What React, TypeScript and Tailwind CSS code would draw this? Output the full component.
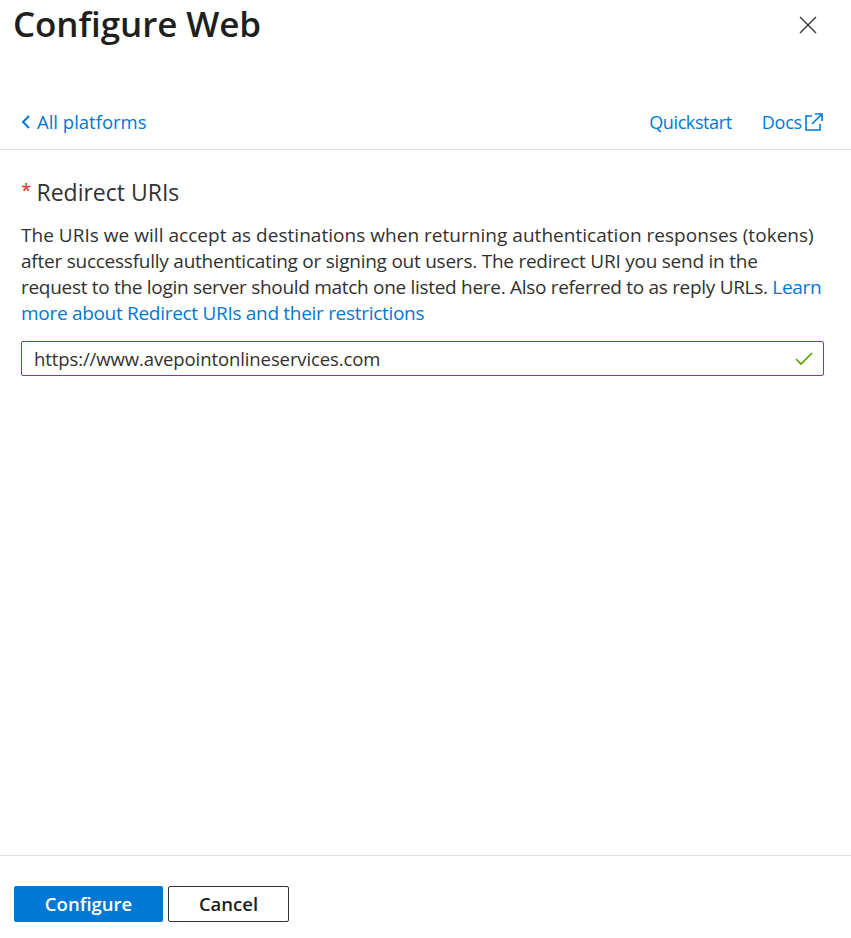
import React from "react";

export default function App() {
  const font = { fontFamily: '"Open Sans", "Noto Sans", sans-serif' };
  return (
    <div className="w-[851px] h-[938px] bg-white flex flex-col text-[#323130]" style={font}>
      <div className="flex justify-between items-start h-[100px]">
        <h1 className="ml-[13px] mt-[1px] text-[35px] leading-[46px] font-semibold tracking-[-0.1px] text-[#201f1e]">Configure Web</h1>
        <button className="mt-[16px] mr-[34px] w-[18px] h-[18px] flex items-center justify-center">
          <svg width="18" height="18" viewBox="0 0 18 18"><path d="M1 1 L17 17 M17 1 L1 17" stroke="#323130" strokeWidth="1.3" /></svg>
        </button>
      </div>
      <div className="flex items-start justify-between h-[50px] pt-[9px] pl-[21px] pr-[27px] border-b border-[#e1dfdd]">
        <a className="flex items-center gap-[6px] text-[#0078d4] text-[18.5px] leading-[26px]">
          <svg width="10" height="14" viewBox="0 0 10 14"><path d="M8 1 L2 7 L8 13" stroke="#0078d4" strokeWidth="2" fill="none" /></svg>
          <span>All platforms</span>
        </a>
        <div className="flex items-center gap-[30px] text-[#0078d4] text-[18px] leading-[26px]">
          <span className="tracking-[-0.4px]">Quickstart</span>
          <span className="flex items-center gap-[2px]"><span className="tracking-[-0.2px]">Docs</span>
            <svg width="20" height="20" viewBox="0 0 20 20" fill="none" stroke="#0078d4" strokeWidth="1.6">
              <path d="M8 4 H2 V18 H16 V12" />
              <path d="M11 2 H18 V9 M18 2 L8 12" />
            </svg>
          </span>
        </div>
      </div>
      <div className="flex-1 px-[21px] pt-[27px]">
        <div className="flex items-start text-[23px] leading-[30px]">
          <span className="text-[#e0301e] text-[19px] mr-[5px] leading-[26px]">*</span>
          <span>Redirect URIs</span>
        </div>
        <p className="mt-[15px] text-[19px] leading-[26px] whitespace-nowrap flex flex-col">
          <span className="tracking-[0.03px]">The URIs we will accept as destinations when returning authentication responses (tokens)</span>
          <span className="tracking-[-0.24px]">after successfully authenticating or signing out users. The redirect URI you send in the</span>
          <span className="tracking-[-0.3px]">request to the login server should match one listed here. Also referred to as reply URLs. <a className="text-[#0078d4]">Learn</a></span>
          <a className="text-[#0078d4] tracking-[-0.3px]">more about Redirect URIs and their restrictions</a>
        </p>
        <div className="mt-[15px] h-[35px] w-[803px] border border-[#9130ad] rounded-[2px] flex items-center justify-between pl-[12px] pr-[10px]">
          <span className="text-[18.5px] tracking-[-0.1px]">https://www.avepointonlineservices.com</span>
          <svg width="18" height="14" viewBox="0 0 18 14"><path d="M1 7 L6 12 L17 1" stroke="#57a300" strokeWidth="1.6" fill="none" /></svg>
        </div>
      </div>
      <div className="border-t border-[#e1dfdd] h-[83px] flex items-start pl-[14px] pt-[30px] gap-[5px]">
        <button className="w-[149px] h-[36px] bg-[#0078d4] text-white text-[18.5px] font-semibold rounded-[2px]">Configure</button>
        <button className="w-[121px] h-[36px] border border-[#323130] text-[#201f1e] text-[18.5px] font-semibold rounded-[2px]">Cancel</button>
      </div>
    </div>
  );
}
